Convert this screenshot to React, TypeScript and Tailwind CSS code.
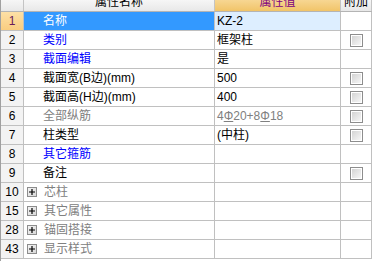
import React from "react";

type Row = {
   no: string;
   name: string;
   value?: React.ReactNode;
   color?: "blue" | "gray" | "black";
   check?: boolean;
   group?: boolean;
   selected?: boolean;
};

const rows: Row[] = [
   { no: "1", name: "名称", value: "KZ-2", selected: true },
   { no: "2", name: "类别", value: "框架柱", color: "blue", check: true },
   { no: "3", name: "截面编辑", value: "是", color: "blue" },
   { no: "4", name: "截面宽(B边)(mm)", value: "500", check: true },
   { no: "5", name: "截面高(H边)(mm)", value: "400", check: true },
   { no: "6", name: "全部纵筋", value: "rebar", color: "gray", check: true },
   { no: "7", name: "柱类型", value: "(中柱)", check: true },
   { no: "8", name: "其它箍筋", color: "blue" },
   { no: "9", name: "备注", check: true },
   { no: "10", name: "芯柱", color: "gray", group: true },
   { no: "15", name: "其它属性", color: "gray", group: true },
   { no: "28", name: "锚固搭接", color: "gray", group: true },
   { no: "43", name: "显示样式", color: "gray", group: true },
];

const font = "font-['Liberation_Sans','Noto_Sans_CJK_SC',sans-serif]";

const Checkbox = () => (
   <div className="w-[13px] h-[13px] border border-[#8d8d8d] bg-white p-px">
      <div className="w-full h-full bg-gradient-to-br from-[#d4d4d4] to-[#f6f6f6]" />
   </div>
);

const Plus = () => (
   <div className="w-[10px] h-[10px] border border-[#8d8d8d] bg-gradient-to-br from-[#f4f4f4] to-[#d8d8d8] flex items-center justify-center text-[10px] leading-none text-black font-bold mr-[7px]">
      <svg width="8" height="8" viewBox="0 0 8 8">
         <path d="M4 1v6M1 4h6" stroke="#000" strokeWidth="1.2" />
      </svg>
   </div>
);

const Rebar = () => (
   <span className="text-[#808080]">
      4<span className="underline">Φ</span>20+8<span className="underline">Φ</span>18
   </span>
);

export default function App() {
   return (
      <div className={`w-[376px] h-[268px] bg-white overflow-hidden ${font} text-[12px]`}>
         <div className="w-[372px] h-[268px] border-l border-[#a0a0a0]">
            {/* header, top part scrolled away */}
            <div className="flex h-[19px] -mt-[7px] border-b border-[#b4b4b4] bg-gradient-to-b from-[#ffffff] to-[#e8e8e8] leading-[18px]">
               <div className="w-[23px] border-r border-[#c4c4c4]" />
               <div className="w-[191px] border-r border-[#c4c4c4] text-center text-black">属性名称</div>
               <div className="w-[126px] border-r border-[#c4c4c4] text-center text-[#800080] bg-gradient-to-b from-[#fbe2ab] to-[#f1c468]">
                  属性值
               </div>
               <div className="w-[31px] border-r border-[#c4c4c4] text-center text-black overflow-hidden whitespace-nowrap">附加</div>
            </div>
            {rows.map((r) => {
               const nameColor =
                  r.selected ? "text-white" : r.color === "blue" ? "text-[#0000ff]" : r.color === "gray" ? "text-[#808080]" : "text-black";
               return (
                  <div key={r.no} className="flex h-[19px] border-b border-[#c0c0c0] leading-[18px]">
                     <div
                        className={
                           r.selected
                              ? "w-[23px] border-r border-[#c0c0c0] text-center bg-gradient-to-b from-[#fde0a6] to-[#f9cd80] text-[#6a1a5a]"
                              : "w-[23px] border-r border-[#c0c0c0] text-center bg-[#f3f3f3] text-black"
                        }
                     >
                        {r.no}
                     </div>
                     <div
                        className={`w-[191px] border-r border-[#c0c0c0] flex items-center whitespace-nowrap ${
                           r.group ? "pl-[3px]" : "pl-[19px]"
                        } ${r.selected ? "bg-[#3399ff]" : "bg-white"} ${nameColor}`}
                     >
                        {r.group && <Plus />}
                        {r.name}
                     </div>
                     <div
                        className={`w-[126px] border-r border-[#c0c0c0] pl-[2px] whitespace-nowrap ${
                           r.selected ? "bg-[#ddeeff]" : "bg-white"
                        } text-black`}
                     >
                        {r.value === "rebar" ? <Rebar /> : r.value}
                     </div>
                     <div className="w-[31px] border-r border-[#c0c0c0] bg-white flex items-center justify-center">
                        {r.check && <Checkbox />}
                     </div>
                  </div>
               );
            })}
         </div>
      </div>
   );
}
